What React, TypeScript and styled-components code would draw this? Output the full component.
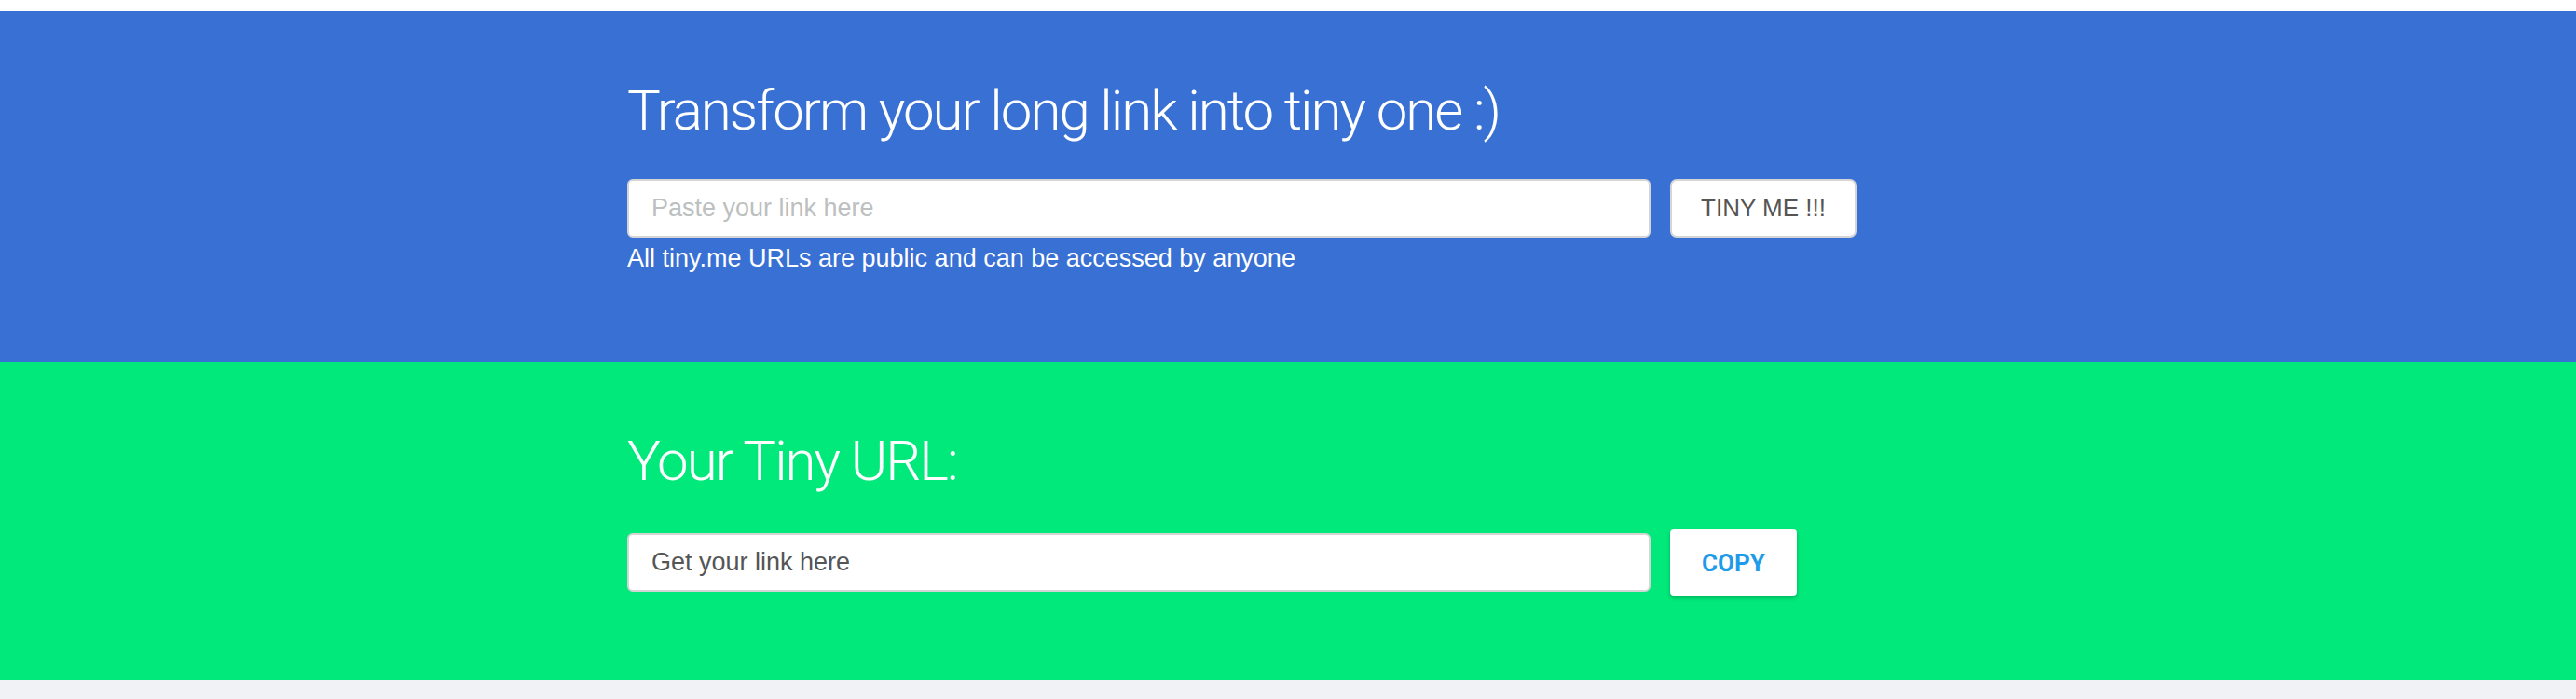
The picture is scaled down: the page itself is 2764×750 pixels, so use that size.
import React, { useState } from 'react';
import styled, { createGlobalStyle } from 'styled-components';

const GlobalStyle = createGlobalStyle`
  html, body {
    margin: 0;
    padding: 0;
    background-color: #f0f2f5;
    font-family: "Liberation Sans", Arial, sans-serif;
  }
`;

const Page = styled.div`
  padding-top: 12px;
  background-color: #ffffff;
`;

const Section = styled.section<{ $bg: string; $height: number }>`
  background-color: ${(p) => p.$bg};
  height: ${(p) => p.$height}px;
  box-sizing: border-box;
  padding-top: 72px;
`;

const Container = styled.div`
  width: 1418px;
  margin: 0 auto;
`;

const Heading = styled.h1`
  margin: 0 0 38px;
  font-family: Roboto, "Liberation Sans", sans-serif;
  font-weight: 300;
  font-size: 60px;
  line-height: 70px;
  letter-spacing: -2px;
  color: #ffffff;
`;

const Row = styled.div`
  display: flex;
  align-items: center;
  gap: 21px;
`;

const LinkInput = styled.input`
  width: 1098px;
  height: 63px;
  box-sizing: border-box;
  padding: 0 24px;
  border: 2px solid #d5d5d5;
  border-radius: 6px;
  background: #ffffff;
  font-family: "Liberation Sans", Arial, sans-serif;
  font-size: 27px;
  color: #555555;
  outline: none;

  &::placeholder {
    color: #bcc0c0;
  }
`;

const TinyButton = styled.button`
  width: 200px;
  height: 63px;
  box-sizing: border-box;
  border: 2px solid #d5d5d5;
  border-radius: 7px;
  background: #ffffff;
  font-family: "Liberation Sans", Arial, sans-serif;
  font-size: 26px;
  color: #555555;
  cursor: pointer;
`;

const CopyButton = styled.button`
  width: 136px;
  height: 71px;
  border: none;
  border-radius: 4px;
  background: #ffffff;
  font-family: Roboto, "Liberation Sans", sans-serif;
  font-weight: 700;
  font-size: 26px;
  color: #1e9be9;
  box-shadow: 0 3px 4px rgba(0, 0, 0, 0.2), 0 1px 2px rgba(0, 0, 0, 0.12);
  cursor: pointer;
`;

const Hint = styled.p`
  margin: 6px 0 0;
  font-family: "Liberation Sans", Arial, sans-serif;
  font-size: 27px;
  line-height: 32px;
  color: #ffffff;
`;

const App: React.FC = () => {
  const [link, setLink] = useState('');
  const [tiny] = useState('Get your link here');

  return (
    <>
      <GlobalStyle />
      <Page>
        <Section $bg="#3870d4" $height={376}>
          <Container>
            <Heading>Transform your long link into tiny one :)</Heading>
            <Row>
              <LinkInput
                placeholder="Paste your link here"
                value={link}
                onChange={(e) => setLink(e.target.value)}
              />
              <TinyButton>TINY ME !!!</TinyButton>
            </Row>
            <Hint>All tiny.me URLs are public and can be accessed by anyone</Hint>
          </Container>
        </Section>
        <Section $bg="#00e97a" $height={342}>
          <Container>
            <Heading>Your Tiny URL:</Heading>
            <Row>
              <LinkInput value={tiny} readOnly />
              <CopyButton>COPY</CopyButton>
            </Row>
          </Container>
        </Section>
      </Page>
    </>
  );
};

export default App;
